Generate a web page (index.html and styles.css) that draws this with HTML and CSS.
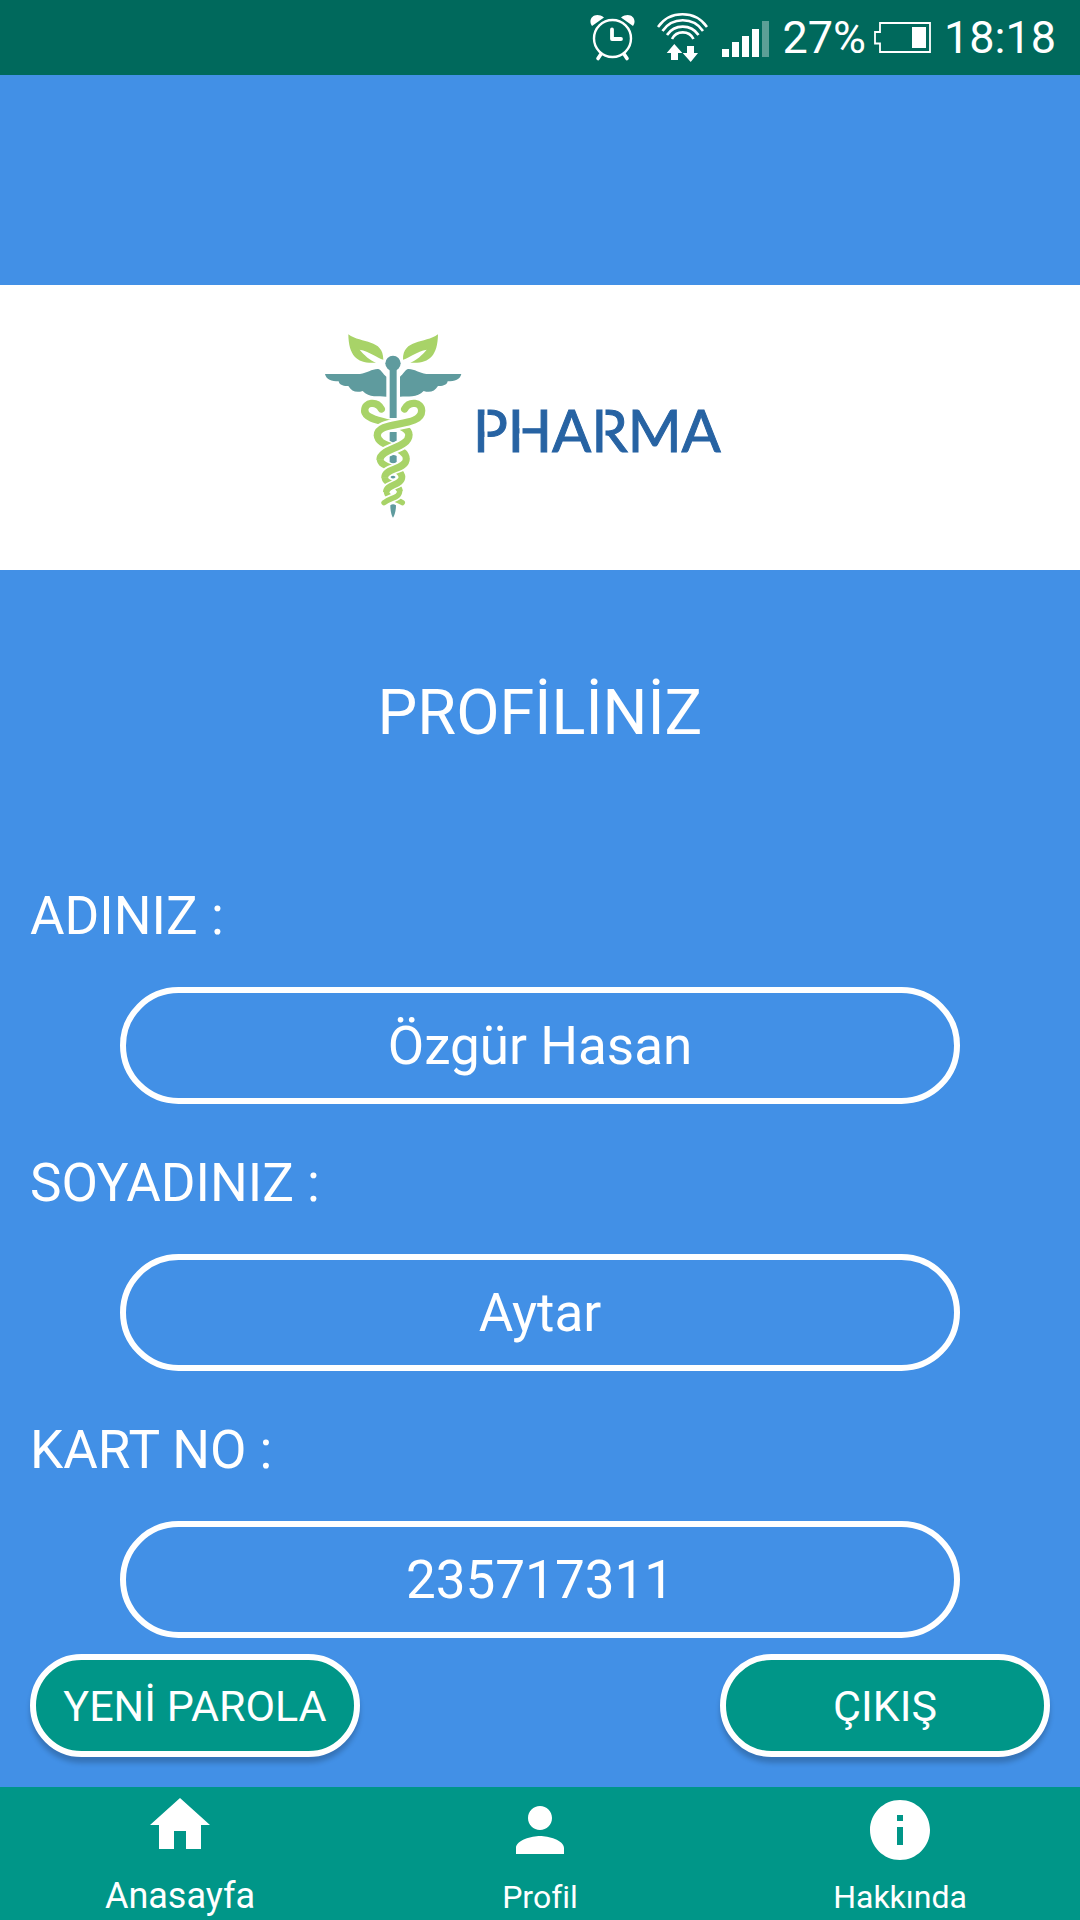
FILE: index.html
```html
<!DOCTYPE html>
<html lang="tr">
<head>
<meta charset="utf-8">
<meta name="viewport" content="width=device-width, initial-scale=1">
<title>Profiliniz</title>
<link rel="stylesheet" href="styles.css">
</head>
<body>
<div class="app">
  <header class="status">
    <svg class="status-icon alarm" width="45" height="75" viewBox="0 0 45 75" aria-hidden="true">
      <path class="fill" d="M2 26C-3 19 5 11 14 17.500Z M43 26C48 19 40 11 31 17.500Z"/>
      <circle class="line" cx="22.500" cy="38.500" r="18.500" stroke-width="2.400"/>
      <path class="line" d="M22 29.500V39H31" stroke-width="3.800" stroke-linecap="round" stroke-linejoin="round"/>
      <path class="line" d="M11 54L8 58.500M34 54L37 58.500" stroke-width="3.600" stroke-linecap="round"/>
    </svg>
    <svg class="status-icon wifi" width="51" height="75" viewBox="0 0 51 75" aria-hidden="true">
      <path class="line" stroke-width="2.600" d="M1 27A30 30 0 0 1 50 27M5.500 31A24.500 24.500 0 0 1 46 31M10 35A19 19 0 0 1 41.500 35M15 39A12 12 0 0 1 36.500 39"/>
      <path class="fill" d="M17.300 44L25.300 53H21V60H14V53H9.700ZM30 46H37V53H41L33.700 62L25.700 53H30Z"/>
    </svg>
    <svg class="status-icon signal" width="47" height="75" viewBox="0 0 47 75" aria-hidden="true">
      <path class="fill" d="M0 49H7V57H0ZM10 42H17V57H10ZM20 36H27V57H20ZM30 29H37V57H30Z"/>
      <path class="fill" opacity=".36" d="M40 21H47V57H40Z"/>
    </svg>
    <span class="percent">27%</span>
    <svg class="status-icon battery" width="58" height="75" viewBox="0 0 58 75" aria-hidden="true">
      <path class="line" stroke-width="1.800" d="M6 23H56V52H6V43.500H1V32H6Z"/>
      <path class="fill" d="M38 27H52V48H38Z"/>
    </svg>
    <span class="clock">18:18</span>
  </header>

  <main class="profile">
    <div class="brand">
      <svg class="logo" width="400" height="191" viewBox="0 0 400 191" role="img" aria-label="Pharma">
        <g transform="translate(-14 -12) scale(.3333)">
          <g class="leaf">
            <path d="M115 43C155 72 220 56 220 119C202 114 178 94 149 89C162 105 180 121 198 128C145 132 116 112 115 43Z"/>
            <path d="M384 43C344 72 279 56 279 119C297 114 321 94 350 89C337 105 319 121 301 128C354 132 383 112 384 43Z"/>
          </g>
          <g class="staff">
            <circle cx="249" cy="130" r="23"/>
            <path d="M239 145H260V294H239Z"/>
            <path d="M45 162H150C172 159 186 146 205 147C215 150 218 162 229 170V230C205 229 178 233 158 213C140 219 125 215 115 198C100 199 88 195 86 184C65 184 48 178 45 162Z"/>
            <path d="M454 162H349C327 159 313 146 294 147C284 150 281 162 270 170V230C294 229 321 233 341 213C359 219 374 215 384 198C399 199 411 195 413 184C434 184 451 178 454 162Z"/>
            <path d="M239 336H260V362L250 368L239 362ZM239 408Q250 402 260 408V426Q250 433 239 426ZM241 471Q249 463 257 471Q249 480 241 471ZM241 556Q249 550 258 556C258 575 253 588 249 593C245 588 241 575 241 556Z"/>
          </g>
          <g class="snake">
            <path stroke-width="22" stroke-linecap="round" d="M214 267C200 242 164 246 164 272"/>
            <path stroke-width="22" d="M164 271C164 315 297 300 297 346"/>
            <path stroke-width="21" d="M202 345C202 385 289 375 289 418"/>
            <path stroke-width="20" d="M210 417C210 446 276 440 276 472"/>
            <path stroke-width="19" d="M224 471C224 496 269 488 269 515"/>
            <path stroke-width="16" stroke-linecap="round" d="M229 514C229 535 260 535 277 548"/>
          </g>
          <g class="gap">
            <path stroke-width="36" d="M335 272C335 325 202 300 202 346"/>
            <path stroke-width="34" d="M297 345C297 385 210 385 210 418"/>
            <path stroke-width="31" d="M289 417C289 450 224 442 224 472"/>
            <path stroke-width="29" d="M276 471C276 497 229 492 229 515"/>
            <path stroke-width="26" d="M269 514C269 535 240 532 222 548"/>
          </g>
          <g class="snake">
            <path stroke-width="22" stroke-linecap="round" d="M284 267C298 242 335 246 335 272C335 325 202 300 202 346"/>
            <path stroke-width="22" d="M297 344C297 385 210 385 210 419"/>
            <path stroke-width="21" d="M289 416C289 450 224 442 224 473"/>
            <path stroke-width="20" d="M276 470C276 497 229 492 229 516"/>
            <path stroke-width="16" stroke-linecap="round" d="M269 513C269 535 240 532 222 548"/>
          </g>
        </g>
        <text class="wordmark" x="149" y="120">PHARMA</text>
        <path class="gap" stroke-width="3" d="M162 76V122M197 94V106M280 76V122"/>
      </svg>
    </div>

    <h1 class="title">PROFİLİNİZ</h1>

    <form class="form">
      <div class="field">
        <label for="first">ADINIZ :</label>
        <input id="first" type="text" value="Özgür Hasan" readonly>
      </div>
      <div class="field">
        <label for="last">SOYADINIZ :</label>
        <input id="last" type="text" value="Aytar" readonly>
      </div>
      <div class="field">
        <label for="card">KART NO :</label>
        <input id="card" type="text" value="235717311" readonly>
      </div>
      <div class="actions">
        <button type="button">YENİ PAROLA</button>
        <button type="button">ÇIKIŞ</button>
      </div>
    </form>
  </main>

  <nav class="tabs">
    <a class="tab active" href="#home">
      <svg width="72" height="72" viewBox="0 0 24 24" aria-hidden="true"><path d="M10 20v-6h4v6h5v-8h3L12 3 2 12h3v8z"/></svg>
      <span>Anasayfa</span>
    </a>
    <a class="tab" href="#profile">
      <svg width="72" height="72" viewBox="0 0 24 24" aria-hidden="true"><path d="M12 12c2.210 0 4-1.790 4-4s-1.790-4-4-4-4 1.790-4 4 1.790 4 4 4zm0 2c-2.670 0-8 1.340-8 4v2h16v-2c0-2.660-5.330-4-8-4z"/></svg>
      <span>Profil</span>
    </a>
    <a class="tab" href="#about">
      <svg width="72" height="72" viewBox="0 0 24 24" aria-hidden="true"><path d="M12 2C6.480 2 2 6.480 2 12s4.480 10 10 10 10-4.480 10-10S17.520 2 12 2zm1 15h-2v-6h2v6zm0-8h-2V7h2v2z"/></svg>
      <span>Hakkında</span>
    </a>
  </nav>
</div>
</body>
</html>
```
FILE: styles.css
```css
* {
  box-sizing: border-box;
}

body {
  margin: 0;
  background: #4290e6;
  color: #fff;
  font-family: Roboto, "Noto Sans", sans-serif;
}

.app {
  display: flex;
  flex-direction: column;
  min-height: 100vh;
}

/* Status bar */
.status {
  display: flex;
  align-items: center;
  justify-content: flex-end;
  padding-right: 24px;
  background: #00695c;
  font-size: 45px;
  line-height: 75px;
}

.status-icon {
  display: block;
  flex: none;
}

.status-icon .fill {
  fill: #fff;
}

.status-icon .line {
  fill: none;
  stroke: #fff;
}

.wifi {
  margin-left: 22px;
}

.signal {
  margin: 0 13px 0 14px;
}

.battery {
  margin: 0 12px 0 8px;
}

/* Profile */
.profile {
  flex: 1;
  padding-top: 210px;
}

.brand {
  display: flex;
  justify-content: center;
  padding: 47px 32px 47px 0;
  background: #fff;
}

.logo {
  display: block;
}

.leaf {
  fill: #a8d368;
}

.staff {
  fill: #5f9b9e;
}

.snake {
  fill: none;
  stroke: #a8d368;
}

.gap {
  fill: none;
  stroke: #fff;
}

.wordmark {
  fill: #2763a3;
  stroke: #2763a3;
  stroke-width: 1px;
  font-family: Lato, sans-serif;
  font-size: 58px;
  font-weight: 400;
}

.title {
  margin: 107px 0 136px;
  font-size: 63px;
  font-weight: 400;
  line-height: 72px;
  text-align: center;
}

.form {
  display: flex;
  flex-direction: column;
  gap: 48px;
  padding: 0 30px 30px;
}

.field {
  display: flex;
  flex-direction: column;
  gap: 40px;
  font-size: 53px;
  line-height: 62px;
}

.field input {
  height: 117px;
  margin: 0 90px;
  padding: 0 40px;
  border: 6px solid #fff;
  border-radius: 60px;
  background: transparent;
  color: inherit;
  font: inherit;
  text-align: center;
  min-width: 0;
}

.actions {
  display: flex;
  justify-content: space-between;
  margin-top: -32px;
}

.actions button {
  width: 330px;
  height: 103px;
  padding: 0;
  border: 6px solid #fff;
  border-radius: 52px;
  background: #009688;
  box-shadow: 0 6px 5px rgba(0, 0, 0, .2);
  color: inherit;
  font: inherit;
  font-size: 43px;
}

/* Bottom tabs */
.tabs {
  display: grid;
  grid-template-columns: repeat(3, 1fr);
  background: #009688;
}

.tab {
  display: flex;
  flex-direction: column;
  align-items: center;
  justify-content: space-between;
  height: 133px;
  padding: 7px 0 1px;
  color: inherit;
  font-size: 32px;
  line-height: 44px;
  text-decoration: none;
}

.tab.active {
  padding: 2px 0 2px;
  font-size: 36px;
}

.tab svg {
  display: block;
  fill: #fff;
}
```
